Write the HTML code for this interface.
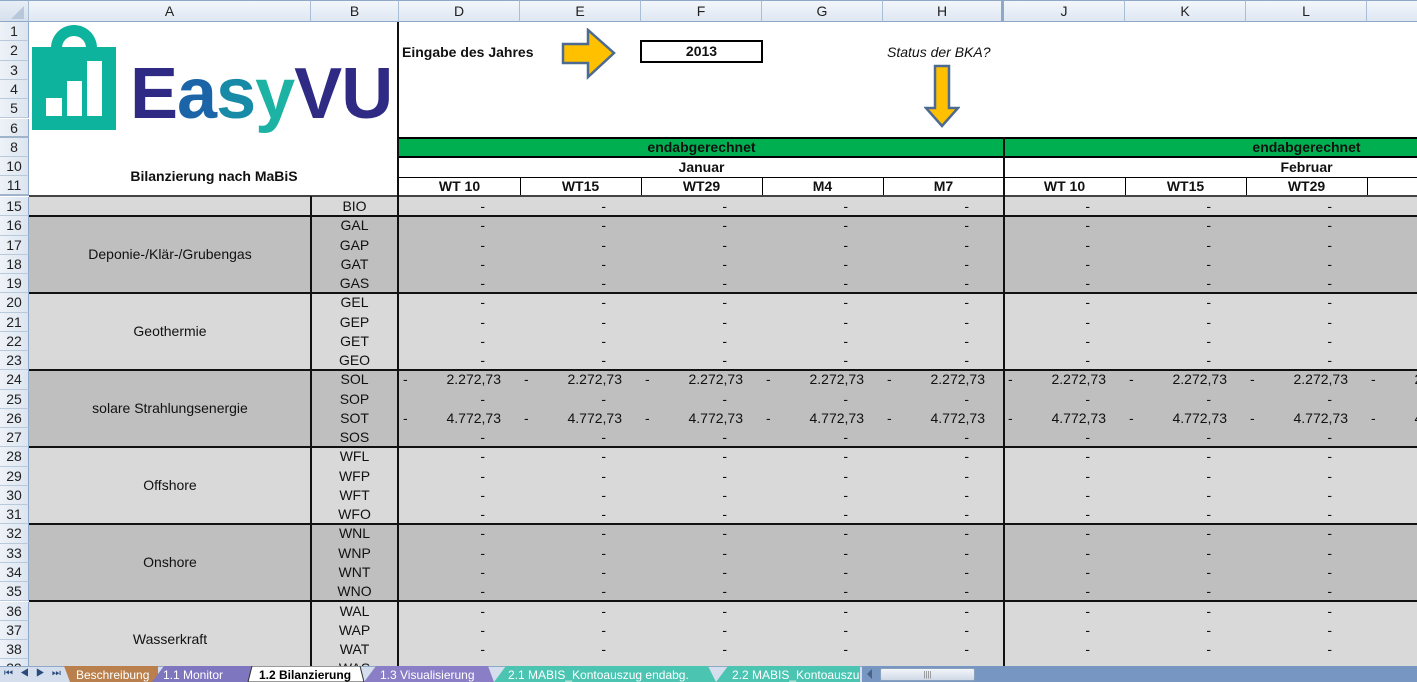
<!DOCTYPE html>
<html><head><meta charset="utf-8"><style>
*{margin:0;padding:0;box-sizing:border-box}
body{width:1417px;height:682px;overflow:hidden;background:#fff;font-family:"Liberation Sans",Arial,sans-serif;position:relative;color:#111}
.abs{position:absolute}
.colh{position:absolute;top:0;height:22px;background:linear-gradient(#f3f6fb,#dfe7f2);border-right:1px solid #a9bdd5;border-bottom:1px solid #8ea8c8;border-top:1px solid #8ea8c8;font-size:14px;text-align:center;line-height:21px;color:#222}
.rowh{position:absolute;left:0;width:29px;background:linear-gradient(90deg,#eef2f8,#dce5f0);border-right:1px solid #8ea8c8;border-bottom:1px solid #b8c9dc;font-size:14px;text-align:center;color:#222}
.band{position:absolute;left:29px;width:1388px}
.r{position:absolute;left:0;width:1417px;height:19px;line-height:19px;font-size:14px}
.r .code{position:absolute;left:311px;width:87px;text-align:center}
.v{position:absolute;left:399px;white-space:nowrap}
.v i{font-style:normal;display:inline-block;width:121px;text-align:right;padding-right:35px;position:relative}
.v i.n{padding-right:19px}
.v i.n b{font-weight:normal;position:absolute;left:4px}
.hl{position:absolute;left:29px;width:1388px;height:2px;background:#111}
.vl{position:absolute;width:2px;background:#111}
.glab{position:absolute;left:29px;width:282px;text-align:center;font-size:14px}
.hdr{position:absolute;font-weight:bold;font-size:14px;text-align:center}
</style></head><body>

<div class="colh" style="left:0;width:29px;background:linear-gradient(#e8eef6,#d6e0ec)"><svg width="28" height="20" style="position:absolute;left:0;top:0"><polygon points="24,5 24,18 11,18" fill="#b8c8dc"/></svg></div>
<div class="colh" style="left:29px;width:282px">A</div>
<div class="colh" style="left:311px;width:88px">B</div>
<div class="colh" style="left:399px;width:121px">D</div>
<div class="colh" style="left:520px;width:121px">E</div>
<div class="colh" style="left:641px;width:121px">F</div>
<div class="colh" style="left:762px;width:121px">G</div>
<div class="colh" style="left:883px;width:121px;border-right:3px solid #8ea8c8">H</div>
<div class="colh" style="left:1004px;width:121px">J</div>
<div class="colh" style="left:1125px;width:121px">K</div>
<div class="colh" style="left:1246px;width:121px">L</div>
<div class="colh" style="left:1367px;width:60px"></div>

<div class="band" style="top:197px;height:20px;background:#d9d9d9"></div>
<div class="band" style="top:216px;height:78px;background:#bfbfbf"></div>
<div class="band" style="top:293px;height:78px;background:#d9d9d9"></div>
<div class="band" style="top:370px;height:78px;background:#bfbfbf"></div>
<div class="band" style="top:447px;height:78px;background:#d9d9d9"></div>
<div class="band" style="top:524px;height:78px;background:#bfbfbf"></div>
<div class="band" style="top:601px;height:66px;background:#d9d9d9"></div>

<svg class="abs" style="left:30px;top:22px" width="90" height="112" viewBox="0 0 90 112">
<path d="M21 30 V26 A23 23 0 0 1 67 26 V30 H56 V26 A12 12 0 0 0 32 26 V30 Z" fill="#0db39d"/>
<rect x="2" y="25" width="84" height="83" fill="#0db39d"/>
<rect x="16" y="76" width="16" height="18" fill="#fff"/>
<rect x="37" y="59" width="15" height="35" fill="#fff"/>
<rect x="57" y="39" width="15" height="55" fill="#fff"/>
</svg>
<div class="abs" style="left:130px;top:49px;font-size:72px;font-weight:bold;letter-spacing:-1px;line-height:90px;white-space:nowrap"><span style="color:#2f2a83">E</span><span style="color:#1b64a8">a</span><span style="color:#168aa6">s</span><span style="color:#1db3a4">y</span><span style="color:#2f2a83">VU</span></div>
<div class="hdr" style="left:29px;width:370px;top:168px">Bilanzierung nach MaBiS</div>

<div class="abs" style="left:402px;top:44px;font-size:14px;font-weight:bold">Eingabe des Jahres</div>
<svg class="abs" style="left:560px;top:28px" width="58" height="52"><polygon points="3,16 28,16 28,2 54,25 28,49 28,35 3,35" fill="#ffc000" stroke="#4d6a92" stroke-width="2.5"/></svg>
<div class="abs" style="left:640px;top:40px;width:123px;height:23px;border:2px solid #000;text-align:center;font-weight:bold;font-size:14px;line-height:19px">2013</div>
<div class="abs" style="left:887px;top:44px;font-size:14px;font-style:italic">Status der BKA?</div>
<svg class="abs" style="left:924px;top:64px" width="36" height="66"><polygon points="11,2 25,2 25,44 34,44 18,62 2,44 11,44" fill="#ffc000" stroke="#4d6a92" stroke-width="2.5"/></svg>

<div class="abs" style="left:399px;top:137px;width:1018px;height:21px;background:#00b050;border-top:2px solid #000;border-bottom:2px solid #000"></div>
<div class="hdr" style="left:399px;width:605px;top:139px">endabgerechnet</div>
<div class="hdr" style="left:1004px;width:605px;top:139px">endabgerechnet</div>
<div class="hdr" style="left:399px;width:605px;top:159px">Januar</div>
<div class="hdr" style="left:1004px;width:605px;top:159px">Februar</div>
<div class="abs" style="left:399px;top:177px;width:1018px;height:1px;background:#000"></div>
<div class="hdr" style="left:399px;width:121px;top:178px">WT 10</div>
<div class="hdr" style="left:520px;width:121px;top:178px">WT15</div>
<div class="hdr" style="left:641px;width:121px;top:178px">WT29</div>
<div class="hdr" style="left:762px;width:121px;top:178px">M4</div>
<div class="hdr" style="left:883px;width:121px;top:178px">M7</div>
<div class="hdr" style="left:1004px;width:121px;top:178px">WT 10</div>
<div class="hdr" style="left:1125px;width:121px;top:178px">WT15</div>
<div class="hdr" style="left:1246px;width:121px;top:178px">WT29</div>
<div class="abs" style="left:520px;top:177px;width:1px;height:19px;background:#000"></div>
<div class="abs" style="left:641px;top:177px;width:1px;height:19px;background:#000"></div>
<div class="abs" style="left:762px;top:177px;width:1px;height:19px;background:#000"></div>
<div class="abs" style="left:883px;top:177px;width:1px;height:19px;background:#000"></div>
<div class="abs" style="left:1125px;top:177px;width:1px;height:19px;background:#000"></div>
<div class="abs" style="left:1246px;top:177px;width:1px;height:19px;background:#000"></div>
<div class="abs" style="left:1367px;top:177px;width:1px;height:19px;background:#000"></div>
<div class="abs" style="left:29px;top:195px;width:1388px;height:2px;background:#444"></div>

<div class="hl" style="top:215px"></div>
<div class="hl" style="top:292px"></div>
<div class="hl" style="top:369px"></div>
<div class="hl" style="top:446px"></div>
<div class="hl" style="top:523px"></div>
<div class="hl" style="top:600px"></div>
<div class="vl" style="left:310px;top:196px;height:471px"></div>
<div class="vl" style="left:397px;top:22px;height:645px"></div>
<div class="vl" style="left:1003px;top:137px;height:530px"></div>

<div class="glab" style="top:246px">Deponie-/Klär-/Grubengas</div>
<div class="glab" style="top:323px">Geothermie</div>
<div class="glab" style="top:400px">solare Strahlungsenergie</div>
<div class="glab" style="top:477px">Offshore</div>
<div class="glab" style="top:554px">Onshore</div>
<div class="glab" style="top:631px">Wasserkraft</div>

<div class="r" style="top:197px"><span class="code">BIO</span><div class="v"><i>-</i><i>-</i><i>-</i><i>-</i><i>-</i><i>-</i><i>-</i><i>-</i></div></div>
<div class="r" style="top:216.3px"><span class="code">GAL</span><div class="v"><i>-</i><i>-</i><i>-</i><i>-</i><i>-</i><i>-</i><i>-</i><i>-</i></div></div>
<div class="r" style="top:235.5px"><span class="code">GAP</span><div class="v"><i>-</i><i>-</i><i>-</i><i>-</i><i>-</i><i>-</i><i>-</i><i>-</i></div></div>
<div class="r" style="top:254.8px"><span class="code">GAT</span><div class="v"><i>-</i><i>-</i><i>-</i><i>-</i><i>-</i><i>-</i><i>-</i><i>-</i></div></div>
<div class="r" style="top:274px"><span class="code">GAS</span><div class="v"><i>-</i><i>-</i><i>-</i><i>-</i><i>-</i><i>-</i><i>-</i><i>-</i></div></div>
<div class="r" style="top:293.3px"><span class="code">GEL</span><div class="v"><i>-</i><i>-</i><i>-</i><i>-</i><i>-</i><i>-</i><i>-</i><i>-</i></div></div>
<div class="r" style="top:312.6px"><span class="code">GEP</span><div class="v"><i>-</i><i>-</i><i>-</i><i>-</i><i>-</i><i>-</i><i>-</i><i>-</i></div></div>
<div class="r" style="top:331.8px"><span class="code">GET</span><div class="v"><i>-</i><i>-</i><i>-</i><i>-</i><i>-</i><i>-</i><i>-</i><i>-</i></div></div>
<div class="r" style="top:351.1px"><span class="code">GEO</span><div class="v"><i>-</i><i>-</i><i>-</i><i>-</i><i>-</i><i>-</i><i>-</i><i>-</i></div></div>
<div class="r" style="top:370.3px"><span class="code">SOL</span><div class="v"><i class="n"><b>-</b>2.272,73</i><i class="n"><b>-</b>2.272,73</i><i class="n"><b>-</b>2.272,73</i><i class="n"><b>-</b>2.272,73</i><i class="n"><b>-</b>2.272,73</i><i class="n"><b>-</b>2.272,73</i><i class="n"><b>-</b>2.272,73</i><i class="n"><b>-</b>2.272,73</i><i class="n"><b>-</b>2.272,73</i></div></div>
<div class="r" style="top:389.6px"><span class="code">SOP</span><div class="v"><i>-</i><i>-</i><i>-</i><i>-</i><i>-</i><i>-</i><i>-</i><i>-</i></div></div>
<div class="r" style="top:408.9px"><span class="code">SOT</span><div class="v"><i class="n"><b>-</b>4.772,73</i><i class="n"><b>-</b>4.772,73</i><i class="n"><b>-</b>4.772,73</i><i class="n"><b>-</b>4.772,73</i><i class="n"><b>-</b>4.772,73</i><i class="n"><b>-</b>4.772,73</i><i class="n"><b>-</b>4.772,73</i><i class="n"><b>-</b>4.772,73</i><i class="n"><b>-</b>4.772,73</i></div></div>
<div class="r" style="top:428.1px"><span class="code">SOS</span><div class="v"><i>-</i><i>-</i><i>-</i><i>-</i><i>-</i><i>-</i><i>-</i><i>-</i></div></div>
<div class="r" style="top:447.4px"><span class="code">WFL</span><div class="v"><i>-</i><i>-</i><i>-</i><i>-</i><i>-</i><i>-</i><i>-</i><i>-</i></div></div>
<div class="r" style="top:466.6px"><span class="code">WFP</span><div class="v"><i>-</i><i>-</i><i>-</i><i>-</i><i>-</i><i>-</i><i>-</i><i>-</i></div></div>
<div class="r" style="top:485.9px"><span class="code">WFT</span><div class="v"><i>-</i><i>-</i><i>-</i><i>-</i><i>-</i><i>-</i><i>-</i><i>-</i></div></div>
<div class="r" style="top:505.2px"><span class="code">WFO</span><div class="v"><i>-</i><i>-</i><i>-</i><i>-</i><i>-</i><i>-</i><i>-</i><i>-</i></div></div>
<div class="r" style="top:524.4px"><span class="code">WNL</span><div class="v"><i>-</i><i>-</i><i>-</i><i>-</i><i>-</i><i>-</i><i>-</i><i>-</i></div></div>
<div class="r" style="top:543.7px"><span class="code">WNP</span><div class="v"><i>-</i><i>-</i><i>-</i><i>-</i><i>-</i><i>-</i><i>-</i><i>-</i></div></div>
<div class="r" style="top:562.9px"><span class="code">WNT</span><div class="v"><i>-</i><i>-</i><i>-</i><i>-</i><i>-</i><i>-</i><i>-</i><i>-</i></div></div>
<div class="r" style="top:582.2px"><span class="code">WNO</span><div class="v"><i>-</i><i>-</i><i>-</i><i>-</i><i>-</i><i>-</i><i>-</i><i>-</i></div></div>
<div class="r" style="top:601.5px"><span class="code">WAL</span><div class="v"><i>-</i><i>-</i><i>-</i><i>-</i><i>-</i><i>-</i><i>-</i><i>-</i></div></div>
<div class="r" style="top:620.7px"><span class="code">WAP</span><div class="v"><i>-</i><i>-</i><i>-</i><i>-</i><i>-</i><i>-</i><i>-</i><i>-</i></div></div>
<div class="r" style="top:640px"><span class="code">WAT</span><div class="v"><i>-</i><i>-</i><i>-</i><i>-</i><i>-</i><i>-</i><i>-</i><i>-</i></div></div>
<div class="r" style="top:659.2px"><span class="code">WAS</span></div>

<div class="rowh" style="top:22px;height:19.3px;line-height:19px">1</div>
<div class="rowh" style="top:41.3px;height:19.3px;line-height:19px">2</div>
<div class="rowh" style="top:60.6px;height:19.3px;line-height:19px">3</div>
<div class="rowh" style="top:79.9px;height:19.3px;line-height:19px">4</div>
<div class="rowh" style="top:99.2px;height:19.3px;line-height:19px">5</div>
<div class="rowh" style="top:118.5px;height:19.3px;line-height:19px;border-bottom:2px solid #9fb3cb">6</div>
<div class="rowh" style="top:137.8px;height:19.3px;line-height:19px">8</div>
<div class="rowh" style="top:157.1px;height:19.3px;line-height:19px">10</div>
<div class="rowh" style="top:176.4px;height:19.3px;line-height:19px;border-bottom:2px solid #9fb3cb">11</div>
<div class="rowh" style="top:197px;height:19.3px;line-height:19px">15</div>
<div class="rowh" style="top:216.3px;height:19.3px;line-height:19px">16</div>
<div class="rowh" style="top:235.5px;height:19.3px;line-height:19px">17</div>
<div class="rowh" style="top:254.8px;height:19.3px;line-height:19px">18</div>
<div class="rowh" style="top:274px;height:19.3px;line-height:19px">19</div>
<div class="rowh" style="top:293.3px;height:19.3px;line-height:19px">20</div>
<div class="rowh" style="top:312.6px;height:19.3px;line-height:19px">21</div>
<div class="rowh" style="top:331.8px;height:19.3px;line-height:19px">22</div>
<div class="rowh" style="top:351.1px;height:19.3px;line-height:19px">23</div>
<div class="rowh" style="top:370.3px;height:19.3px;line-height:19px">24</div>
<div class="rowh" style="top:389.6px;height:19.3px;line-height:19px">25</div>
<div class="rowh" style="top:408.9px;height:19.3px;line-height:19px">26</div>
<div class="rowh" style="top:428.1px;height:19.3px;line-height:19px">27</div>
<div class="rowh" style="top:447.4px;height:19.3px;line-height:19px">28</div>
<div class="rowh" style="top:466.6px;height:19.3px;line-height:19px">29</div>
<div class="rowh" style="top:485.9px;height:19.3px;line-height:19px">30</div>
<div class="rowh" style="top:505.2px;height:19.3px;line-height:19px">31</div>
<div class="rowh" style="top:524.4px;height:19.3px;line-height:19px">32</div>
<div class="rowh" style="top:543.7px;height:19.3px;line-height:19px">33</div>
<div class="rowh" style="top:562.9px;height:19.3px;line-height:19px">34</div>
<div class="rowh" style="top:582.2px;height:19.3px;line-height:19px">35</div>
<div class="rowh" style="top:601.5px;height:19.3px;line-height:19px">36</div>
<div class="rowh" style="top:620.7px;height:19.3px;line-height:19px">37</div>
<div class="rowh" style="top:640px;height:19.3px;line-height:19px">38</div>
<div class="rowh" style="top:659.2px;height:19.3px;line-height:19px">39</div>

<div class="abs" style="left:0;top:666px;width:1417px;height:16px;background:#d4deec;border-top:1px solid #8ea8c8"></div>
<div class="abs" style="left:4px;top:666px;font-size:10px;color:#2a4a7a;letter-spacing:7px;line-height:16px">⏮◀▶⏭</div>
<svg class="abs" style="left:60px;top:666px" width="805" height="16" font-family="Liberation Sans, Arial, sans-serif" font-size="12">
<polygon points="4,0 98,0 98,16 10,16" fill="#b9804d"/>
<text x="16" y="13" fill="#fff">Beschreibung</text>
<polygon points="92,16 104,0 192,0 190,16" fill="#7f76c0"/>
<text x="103" y="13" fill="#fff">1.1 Monitor</text>
<polygon points="188,16 192,0 300,0 304,16" fill="#fff" stroke="#333" stroke-width="1"/>
<text x="199" y="13" fill="#000" font-weight="bold">1.2 Bilanzierung</text>
<polygon points="304,16 316,0 428,0 434,16" fill="#8a7fc6"/>
<text x="320" y="13" fill="#fff">1.3 Visualisierung</text>
<polygon points="434,16 446,0 648,0 656,16" fill="#4cc4b2"/>
<text x="448" y="13" fill="#fff">2.1 MABIS_Kontoauszug endabg.</text>
<polygon points="656,16 668,0 800,0 800,16" fill="#4cc4b2"/>
<text x="672" y="13" fill="#fff">2.2 MABIS_Kontoauszu</text>
</svg>
<div class="abs" style="left:862px;top:666px;width:555px;height:16px;background:#7797c2"></div>
<div class="abs" style="left:880px;top:668px;width:95px;height:13px;background:linear-gradient(#f2f5fa,#cfd9e6);border:1px solid #8aa0bf;border-radius:2px;font-size:8px;text-align:center;color:#777;line-height:11px">||||</div>
<svg class="abs" style="left:866px;top:668px" width="8" height="12"><polygon points="6,1 6,11 1,6" fill="#4a6286"/></svg>
</body></html>
